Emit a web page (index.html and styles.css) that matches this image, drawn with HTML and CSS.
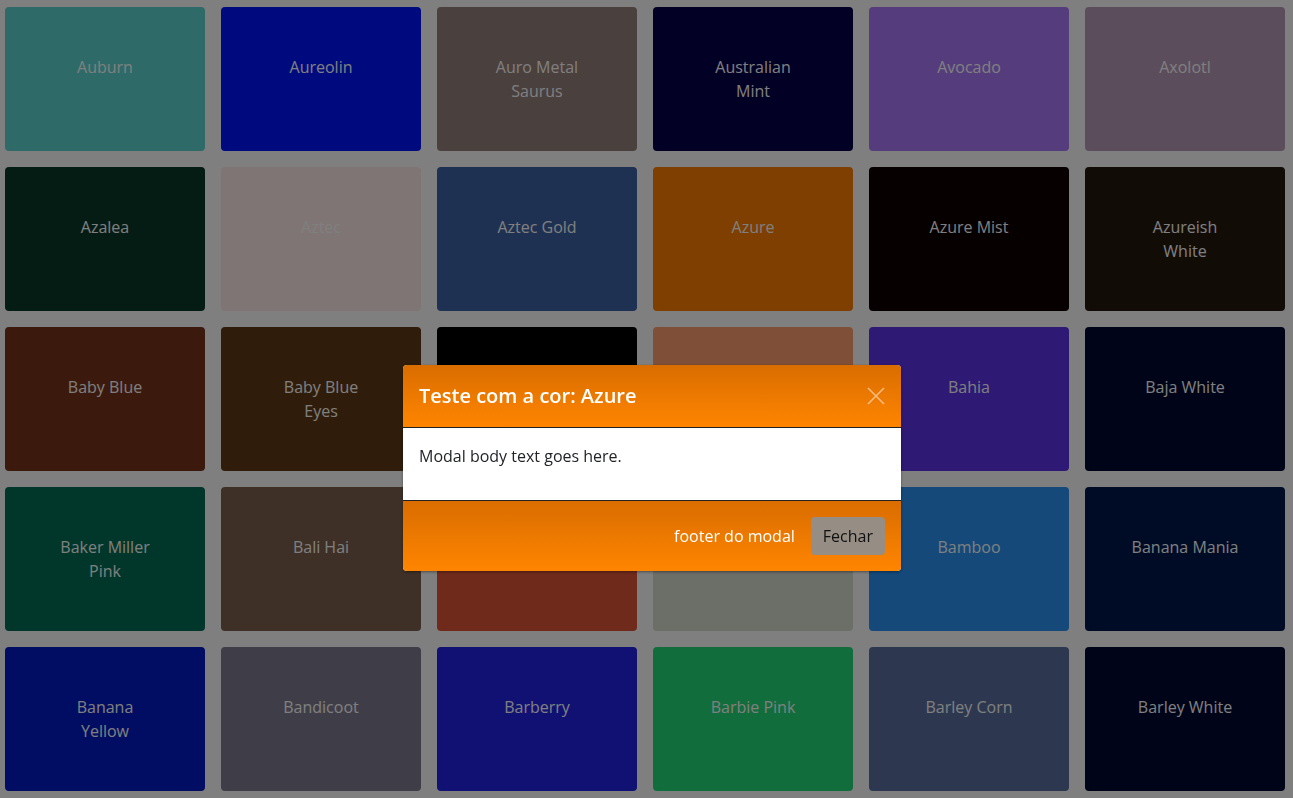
FILE: index.html
```html
<!DOCTYPE html>
<html lang="pt">
<head>
<meta charset="utf-8">
<title>Cores</title>
<link rel="stylesheet" href="styles.css">
</head>
<body>
<div class="grid">
  <div class="tile c-auburn">Auburn</div>
  <div class="tile c-aureolin">Aureolin</div>
  <div class="tile c-auro">Auro Metal<br>Saurus</div>
  <div class="tile c-australian">Australian<br>Mint</div>
  <div class="tile c-avocado">Avocado</div>
  <div class="tile c-axolotl">Axolotl</div>

  <div class="tile c-azalea">Azalea</div>
  <div class="tile c-aztec">Aztec</div>
  <div class="tile c-aztecgold">Aztec Gold</div>
  <div class="tile c-azure">Azure</div>
  <div class="tile c-azuremist">Azure Mist</div>
  <div class="tile c-azureish">Azureish<br>White</div>

  <div class="tile c-babyblue">Baby Blue</div>
  <div class="tile c-babyblueeyes">Baby Blue<br>Eyes</div>
  <div class="tile c-black"></div>
  <div class="tile c-badlands"></div>
  <div class="tile c-bahia">Bahia</div>
  <div class="tile c-bajawhite">Baja White</div>

  <div class="tile c-baker">Baker Miller<br>Pink</div>
  <div class="tile c-balihai">Bali Hai</div>
  <div class="tile c-ballblue"></div>
  <div class="tile c-baltic"></div>
  <div class="tile c-bamboo">Bamboo</div>
  <div class="tile c-bananamania">Banana Mania</div>

  <div class="tile c-bananayellow">Banana<br>Yellow</div>
  <div class="tile c-bandicoot">Bandicoot</div>
  <div class="tile c-barberry">Barberry</div>
  <div class="tile c-barbie">Barbie Pink</div>
  <div class="tile c-barleycorn">Barley Corn</div>
  <div class="tile c-barleywhite">Barley White</div>
</div>

<div class="backdrop"></div>

<div class="modal">
  <div class="modal-header">
    <h5 class="modal-title">Teste com a cor: Azure</h5>
    <button class="close" type="button" aria-label="Close">
      <svg width="18" height="18" viewBox="0 0 18 18"><path d="M1 1 L17 17 M17 1 L1 17" stroke="#ffffff" stroke-width="1.6" fill="none"/></svg>
    </button>
  </div>
  <div class="modal-body">
    <p>Modal body text goes here.</p>
  </div>
  <div class="modal-footer">
    <span class="footer-text">footer do modal</span>
    <button class="btn" type="button">Fechar</button>
  </div>
</div>
</body>
</html>
```

FILE: styles.css
```css
html, body {
  margin: 0;
  padding: 0;
}
body {
  background: #ffffff;
  font-family: "Open Sans", "Noto Sans", sans-serif;
  font-size: 16px;
  line-height: 24px;
  overflow: hidden;
  height: 798px;
}
.grid {
  display: grid;
  grid-template-columns: repeat(6, 200px);
  grid-auto-rows: 144px;
  column-gap: 16px;
  row-gap: 16px;
  padding: 7px 0 0 5px;
}
.tile {
  border-radius: 4px;
  color: #ffffff;
  text-align: center;
  padding-top: 48px;
  box-sizing: border-box;
}
.c-auburn { background: #5cd6d0; }
.c-aureolin { background: #0014ff; }
.c-auro { background: #94807c; }
.c-australian { background: #06004a; }
.c-avocado { background: #aa7afa; }
.c-axolotl { background: #b89ab8; }
.c-azalea { background: #0a3828; }
.c-aztec { background: #feeaea; }
.c-aztecgold { background: #3c62a4; }
.c-azure { background: #fc7e00; }
.c-azuremist { background: #0c0000; }
.c-azureish { background: #24180e; }
.c-babyblue { background: #76341a; }
.c-babyblueeyes { background: #603814; }
.c-black { background: #000000; }
.c-badlands { background: #fea06e; }
.c-bahia { background: #5c34ea; }
.c-bajawhite { background: #000830; }
.c-baker { background: #006e54; }
.c-balihai { background: #7c604e; }
.c-ballblue { background: #e05436; }
.c-baltic { background: #d8dcd0; }
.c-bamboo { background: #2892f4; }
.c-bananamania { background: #00184c; }
.c-bananayellow { background: #001ac4; }
.c-bandicoot { background: #7e7c90; }
.c-barberry { background: #2022e6; }
.c-barbie { background: #22da78; }
.c-barleycorn { background: #5a70a0; }
.c-barleywhite { background: #000830; }

.backdrop {
  position: fixed;
  inset: 0;
  background: rgba(0, 0, 0, 0.5);
}
.modal {
  position: fixed;
  left: 403px;
  top: 365px;
  width: 498px;
  border-radius: 4px;
  overflow: hidden;
  box-shadow: 0 1px 3px rgba(0, 0, 0, 0.4);
  background: #ffffff;
}
.modal-header {
  display: flex;
  align-items: center;
  justify-content: space-between;
  padding: 16px;
  background: linear-gradient(#d96d00, #ff8500);
  border-bottom: 1px solid #222222;
}
.modal-title {
  margin: 0;
  font-size: 20px;
  line-height: 30px;
  font-weight: 600;
  color: #ffffff;
}
.close {
  border: 0;
  background: none;
  padding: 0;
  opacity: 0.5;
  display: flex;
  width: 18px;
  height: 18px;
}
.modal-body {
  padding: 16px;
  color: #212529;
}
.modal-body p {
  margin: 0 0 16px 0;
}
.modal-footer {
  display: flex;
  align-items: center;
  justify-content: flex-end;
  gap: 16px;
  padding: 16px;
  background: linear-gradient(#d96d00, #ff8500);
  border-top: 1px solid #222222;
}
.footer-text {
  color: #ffffff;
}
.btn {
  font-family: inherit;
  font-size: 16px;
  line-height: 24px;
  padding: 7px 12px;
  border: 0;
  border-radius: 4px;
  background: #968d84;
  color: #111111;
}
```
